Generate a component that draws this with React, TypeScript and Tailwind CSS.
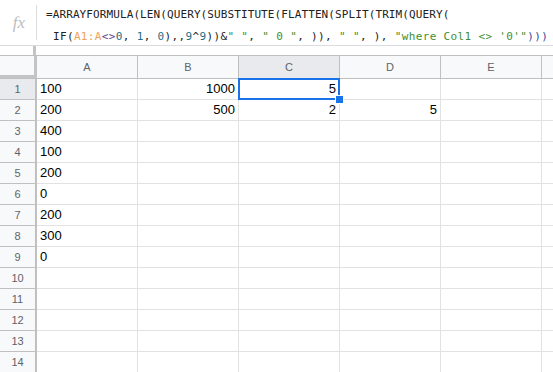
import React from "react";

const cols = ["A", "B", "C", "D", "E"];

const cells: Record<number, (string | null)[]> = {
  1: ["100", "1000", "5", null, null],
  2: ["200", "500", "2", "5", null],
  3: ["400", null, null, null, null],
  4: ["100", null, null, null, null],
  5: ["200", null, null, null, null],
  6: ["0", null, null, null, null],
  7: ["200", null, null, null, null],
  8: ["300", null, null, null, null],
  9: ["0", null, null, null, null],
};

const rows = Array.from({ length: 14 }, (_, i) => i + 1);

const Num = ({ children }: { children: React.ReactNode }) => (
  <span className="text-[#1c6f86]">{children}</span>
);
const Str = ({ children }: { children: React.ReactNode }) => (
  <span className="text-[#3f8f32]">{children}</span>
);

const FormulaBar = () => (
  <div className="flex h-[46px] border-b border-[#dadce0] bg-white">
    <div className="flex w-[36px] items-center justify-center">
      <span
        className="pl-[2px] text-[17px] italic text-[#bdbdbd]"
        style={{ fontFamily: '"Liberation Serif", serif' }}
      >
        fx
      </span>
    </div>
    <div className="my-[5px] w-px bg-[#dadce0]" />
    <div
      className="flex flex-col pl-[9px] pt-[4px] text-[11px] leading-[22px] whitespace-pre text-[#222]"
      style={{ fontFamily: '"DejaVu Sans Mono", monospace' }}
    >
      <div className="tracking-[0.1px]">=ARRAYFORMULA(LEN(QUERY(SUBSTITUTE(FLATTEN(SPLIT(TRIM(QUERY(</div>
      <div className="tracking-[0.35px]">
        {" IF("}
        <span className="text-[#f0a25a]">A1:A</span>
        <span className="text-[#5b3f8c]">{"<>"}</span>
        <Num>0</Num>
        {", "}
        <Num>1</Num>
        {", "}
        <Num>0</Num>
        {"),,"}
        <Num>9</Num>^<Num>9</Num>
        {"))&"}
        <Str>{'" "'}</Str>
        {", "}
        <Str>{'" 0 "'}</Str>
        {", )), "}
        <Str>{'" "'}</Str>
        {", ), "}
        <Str>{"\"where Col1 <> '0'\""}</Str>
        <span className="text-[#3b4a9c]">{")))"}</span>
      </div>
    </div>
  </div>
);

export default function App() {
  return (
    <div
      className="h-[372px] w-[553px] overflow-hidden bg-white text-[13px] text-black"
      style={{ fontFamily: '"Liberation Sans", Arial, sans-serif' }}
    >
      <FormulaBar />
      {/* strip above the column headers */}
      <div className="flex h-[9px]">
        <div className="w-[36px] border-r-[3px] border-[#c4c4c4]" />
      </div>
      {/* column headers */}
      <div className="flex h-[24px] border-y border-[#c0c0c0] bg-[#f8f9fa] text-[11px] text-[#5f6368]">
        <div className="w-[37px] border-r-[3px] border-b-[3px] border-[#c4c4c4]" />
        {cols.map((c) => (
          <div
            key={c}
            className={`flex w-[101px] shrink-0 items-center justify-center border-r border-[#c0c0c0] ${
              c === "C" ? "bg-[#e8eaed]" : ""
            }`}
          >
            {c}
          </div>
        ))}
        <div className="flex-1" />
      </div>
      {rows.map((r) => (
        <div key={r} className="flex h-[21px]">
          <div
            className={`flex w-[37px] shrink-0 items-center justify-center border-r-2 border-b border-[#c0c0c0] text-[11px] text-[#5f6368] ${
              r === 1 ? "bg-[#e8eaed]" : "bg-[#f8f9fa]"
            }`}
          >
            {r}
          </div>
          {cols.map((c, ci) => {
            const v = cells[r]?.[ci] ?? null;
            const selected = r === 1 && c === "C";
            return (
              <div
                key={c}
                className={`relative flex w-[101px] shrink-0 items-center border-r border-b border-[#e2e2e2] px-[3px] ${
                  ci === 0 ? "justify-start" : "justify-end"
                } ${selected ? "z-10" : ""}`}
              >
                {v}
                {selected && (
                  <>
                    <div className="absolute -top-px -left-px right-[-1px] bottom-[-1px] border-2 border-[#1a73e8]" />
                    <div className="absolute right-[-5px] bottom-[-5px] h-[9px] w-[9px] border border-white bg-[#1a73e8]" />
                  </>
                )}
              </div>
            );
          })}
          <div className="flex-1 border-b border-[#e2e2e2]" />
        </div>
      ))}
    </div>
  );
}
